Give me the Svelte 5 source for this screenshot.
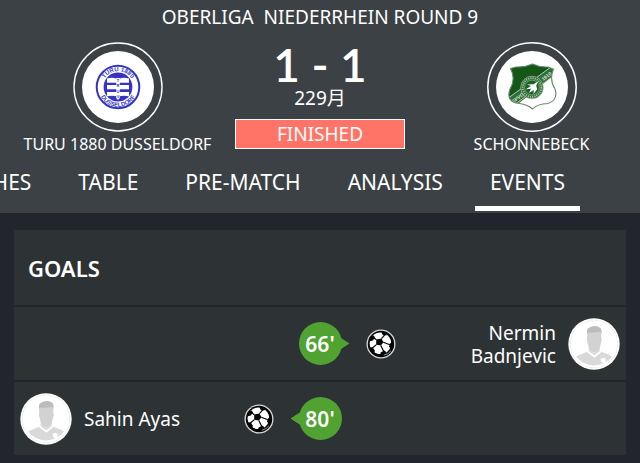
<script>
  const tabs = ['MATCHES', 'TABLE', 'PRE-MATCH', 'ANALYSIS', 'EVENTS'];
  let active = $state('EVENTS');

  const goals = [
    { side: 'away', minute: 66, player: 'Nermin Badnjevic' },
    { side: 'home', minute: 80, player: 'Sahin Ayas' }
  ];
</script>

{#snippet ball()}
  <svg class="ball" viewBox="0 0 30 30" role="img" aria-label="Goal">
    <circle cx="15" cy="15" r="14.5" fill="#d5d7d8" />
    <circle cx="15" cy="15" r="13.2" fill="#050505" />
    <circle cx="14.4" cy="14.3" r="10.8" fill="#fff" />
    <g fill="#050505">
      <path d="M10.2 10.6 15.4 9.4 17.6 13.2 14.8 16.6 10.2 15.8Z" />
      <path d="M4 8 7.8 6.6 9 8.4 6.8 11.4 3 12.6Z" />
      <path d="M15.6 3 20.4 3.6 21 6 18.2 6.8 16.2 5.2Z" />
      <path d="M26.2 12.6 23.8 14.8 23 17.6 24.4 19.4 27 17Z" />
      <path d="M3 18.6 6.6 18.2 8.8 21.6 8.4 24.6 4.8 23Z" />
      <path d="M14.6 23.4 18.2 21.6 20.2 23 18.4 26.4 14 26Z" />
    </g>
    <path d="M10.4 10.8 8 9M15.4 9.6 18.6 6.2M17.4 13.2 23.8 15.8M14.8 16.4 17.8 22.4M10.4 15.6 6.4 19" stroke="#050505" stroke-width="1.2" />
    <path d="M17.8 26.2Q22.4 25.4 24.9 21.8" fill="none" stroke="#bbb" stroke-width="0.8" />
  </svg>
{/snippet}

{#snippet avatar()}
  <svg class="avatar" viewBox="0 0 52 52" aria-hidden="true">
    <circle cx="26" cy="26" r="25.7" fill="#fff" />
    <circle cx="26" cy="26" r="23.8" fill="none" stroke="#f0f0f0" stroke-width="1" />
    <path d="M8 38.5Q14 35.2 19.5 33.8L26.5 38.8 33 33.8Q39 35.5 44 38.5A22.5 22.5 0 0 1 8 38.5Z" fill="#d9d9d9" />
    <path d="M20.7 29H31.8V34.2L26.5 38 20.4 34.2Z" fill="#dedede" />
    <path d="M19.2 13.5Q19.5 9.5 26.5 9.5 33 9.5 33.3 13.5L33.2 20Q34.5 21.2 33 24.5 32 31 29 33.2 26.5 35 23.7 33.2 20.3 30.5 19.6 24.5 18 21.5 19.2 20Z" fill="#d2d2d2" />
    <path d="M19 16Q18 10.2 22.5 9 28 6.7 32.2 9.8 34 11.5 33.4 16L32.4 13.8Q26 14.8 20.3 14.7Z" fill="#bcbcbc" />
    <path d="M19.5 33.4 26.3 38.6 33 33.4" fill="none" stroke="#fff" stroke-width="1.8" />
    <path d="M32.6 40.4Q35 40.6 35.4 39.4 36.2 40.6 37.8 40.4 38 44.5 35.2 45.6 32.6 44.2 32.6 40.4Z" fill="#fff" />
  </svg>
{/snippet}

<div class="page">
  <header>
    <h1>OBERLIGA&nbsp; NIEDERRHEIN ROUND 9</h1>

    <div class="match">
      <section class="team home">
        <svg class="crest" viewBox="0 0 90 90" aria-hidden="true">
          <circle cx="45" cy="45" r="44" fill="none" stroke="#fff" stroke-width="1.4" />
          <circle cx="45" cy="45" r="36" fill="#fff" />
          <circle cx="45" cy="45" r="21.3" fill="#fff" stroke="#3633c4" stroke-width="2" />
          <circle cx="45" cy="45" r="14.4" fill="#3633c4" />
          <g fill="#fff">
            <path d="M34 36.5Q40 34.8 44 37V40.7H34Z" />
            <path d="M46 37Q50 34.8 56 36.5V40.7H46Z" />
            <path d="M34 43H44V47.3H34ZM46 43H56V47.3H46ZM34 50H44V54.3Q39 53 34 54.3ZM46 50H56V54.3Q51 53 46 54.3Z" />
          </g>
          <path d="M43.2 36H46.8V56L45 58 43.2 56Z" fill="#fff" />
          <g class="mono">
            <text x="45" y="39.5">T</text>
            <text x="45" y="45">R</text>
            <text x="45" y="50.5">U</text>
            <text x="45" y="56">V</text>
          </g>
          <path id="arc-top" d="M29.2 45A15.8 15.8 0 0 1 60.8 45" fill="none" />
          <path id="arc-bottom" d="M25.2 45A19.8 19.8 0 0 0 64.8 45" fill="none" />
          <text class="ring"><textPath href="#arc-top" startOffset="50%">TURU 1880</textPath></text>
          <text class="ring"><textPath href="#arc-bottom" startOffset="50%">DUSSELDORF</textPath></text>
        </svg>
        <h2>TURU 1880 DUSSELDORF</h2>
      </section>

      <section class="result">
        <strong>1 - 1</strong>
        <time>229月</time>
        <span class="status">FINISHED</span>
      </section>

      <section class="team away">
        <svg class="crest" viewBox="0 0 90 90" aria-hidden="true">
          <defs>
            <clipPath id="shield">
              <path d="M23.5 26.5 29 25Q38 25.5 45.5 22 53 25.5 61 25L66.5 27Q62 38 68 47 71.5 58 61 61.5 50 62 45.5 67 40 62 29 61 19 58 23 47 29 37 23.5 26.5Z" />
            </clipPath>
          </defs>
          <circle cx="45" cy="45" r="44.2" fill="none" stroke="#fff" stroke-width="1.5" />
          <circle cx="45" cy="45" r="36" fill="#fff" />
          <g clip-path="url(#shield)">
            <path d="M18 18H72L18 66Z" fill="#145718" />
            <path d="M20 57 64 25 69 32 27 65Z" fill="#316e37" />
            <path d="M20 57 64 25M27 63 69 32" stroke="#d7e3d6" stroke-width="0.8" />
            <g transform="translate(45 45) rotate(-37)" class="sash">
              <text x="-18" y="2">SPVG</text>
              <text x="18" y="2">1910</text>
            </g>
          </g>
          <path d="M23.5 26.5 29 25Q38 25.5 45.5 22 53 25.5 61 25L66.5 27Q62 38 68 47 71.5 58 61 61.5 50 62 45.5 67 40 62 29 61 19 58 23 47 29 37 23.5 26.5Z" fill="none" stroke="#69896a" stroke-width="1.1" />
          <circle cx="45" cy="45.5" r="11.3" fill="#2d6c32" stroke="#a9c2aa" stroke-width="0.7" />
          <circle cx="45" cy="45.5" r="9.3" fill="none" stroke="#a9c2aa" stroke-width="1.8" stroke-dasharray="1.2 1" />
          <circle cx="45" cy="45.5" r="7.4" fill="#1d6224" stroke="#bdd0bd" stroke-width="0.5" />
          <path d="M51 39.5 46.5 42.2 40 42.5 44 44 38.8 47.2 44 46.8 42 51 46.8 48 46.5 52 50.2 47.2 49.2 43.8Z" fill="#fff" />
        </svg>
        <h2>SCHONNEBECK</h2>
      </section>
    </div>

    <nav>
      {#each tabs as tab}
        <button type="button" class:active={active === tab} onclick={() => (active = tab)}>{tab}</button>
      {/each}
    </nav>
  </header>

  <main>
    <h3>GOALS</h3>
    <ul>
      {#each goals as goal}
        <li class={goal.side}>
          <div class="detail">
            {@render ball()}
            <span class="player">{goal.player}</span>
            {@render avatar()}
          </div>
          <span class="minute">{goal.minute}'</span>
        </li>
      {/each}
    </ul>
  </main>
</div>

<style>
  :global(body) {
    margin: 0;
    background: #22252d;
  }

  .page {
    color: #fff;
    font-family: 'Noto Sans', 'Noto Sans CJK JP', sans-serif;
    overflow: hidden;
  }

  h1, h2, h3, ul {
    margin: 0;
    padding: 0;
    font-weight: 400;
  }

  header {
    background: #3c4145;
  }

  h1 {
    padding-top: 4px;
    font-size: 19px;
    line-height: 26px;
    text-align: center;
  }

  .match {
    display: grid;
    grid-template-columns: 1fr 170px 1fr;
    padding-top: 12px;
  }

  .team {
    display: flex;
    flex-direction: column;
    align-items: center;
  }

  .team.away {
    padding-left: 18px;
  }

  .crest {
    width: 90px;
    height: 90px;
  }

  .crest text {
    font-family: 'Liberation Sans', sans-serif;
    font-weight: 700;
    text-anchor: middle;
  }

  .ring {
    fill: #3633c4;
    font-size: 6px;
  }

  .mono text {
    fill: #3633c4;
    font-size: 4px;
  }

  .sash text {
    fill: #d7e3d6;
    font-size: 5px;
  }

  h2 {
    font-size: 16px;
    line-height: 24px;
    white-space: nowrap;
  }

  .result {
    display: flex;
    flex-direction: column;
    align-items: center;
  }

  .result strong {
    font-family: Lato, sans-serif;
    font-size: 46px;
    font-weight: 600;
    line-height: 46px;
  }

  .result time {
    font-size: 19px;
    line-height: 20px;
  }

  .status {
    box-sizing: border-box;
    width: 100%;
    margin-top: 11px;
    border: 1px solid #fff;
    background: #ff7466;
    font-size: 19px;
    line-height: 28px;
    text-align: center;
  }

  nav {
    display: flex;
    justify-content: flex-end;
    gap: 17px;
    padding: 8px 60px 2px 0;
  }

  nav button {
    flex: none;
    padding: 3px 15px 9px;
    border: 0;
    border-bottom: 5px solid transparent;
    background: none;
    color: inherit;
    font: inherit;
    font-size: 21px;
    line-height: 30px;
    cursor: pointer;
  }

  nav button.active {
    border-bottom-color: #fff;
  }

  main {
    padding: 17px 14px 8px;
  }

  h3 {
    padding: 1px 14px 0;
    background: #2d3235;
    font-size: 22px;
    font-weight: 600;
    line-height: 74px;
  }

  li {
    display: grid;
    grid-template-columns: 1fr 43px 1fr;
    align-items: center;
    height: 73px;
    margin-top: 2px;
    background: #2d3235;
  }

  .detail {
    display: flex;
    grid-row: 1;
    align-items: center;
    padding: 0 6px 0 24px;
  }

  .home .detail {
    grid-column: 1;
    flex-direction: row-reverse;
    padding: 0 25px 0 6px;
  }

  .away .detail {
    grid-column: 3;
  }

  .ball {
    flex: none;
    width: 30px;
    height: 30px;
  }

  .avatar {
    flex: none;
    width: 52px;
    height: 52px;
  }

  .player {
    flex: 1;
    padding: 2px 12px 0;
    font-size: 19px;
    line-height: 23px;
  }

  .away .player {
    padding-left: 50px;
    text-align: right;
  }

  .minute {
    position: relative;
    grid-row: 1;
    grid-column: 2;
    height: 43px;
    border-radius: 50%;
    background: #51a331;
    font-size: 21px;
    font-weight: 600;
    line-height: 44px;
    text-align: center;
  }

  .minute::after {
    position: absolute;
    top: 15px;
    left: 41px;
    width: 10px;
    height: 13px;
    background: #51a331;
    clip-path: polygon(0 0, 100% 50%, 0 100%);
    content: '';
  }

  .home .minute::after {
    right: 41px;
    left: auto;
    clip-path: polygon(100% 0, 0 50%, 100% 100%);
  }
</style>
